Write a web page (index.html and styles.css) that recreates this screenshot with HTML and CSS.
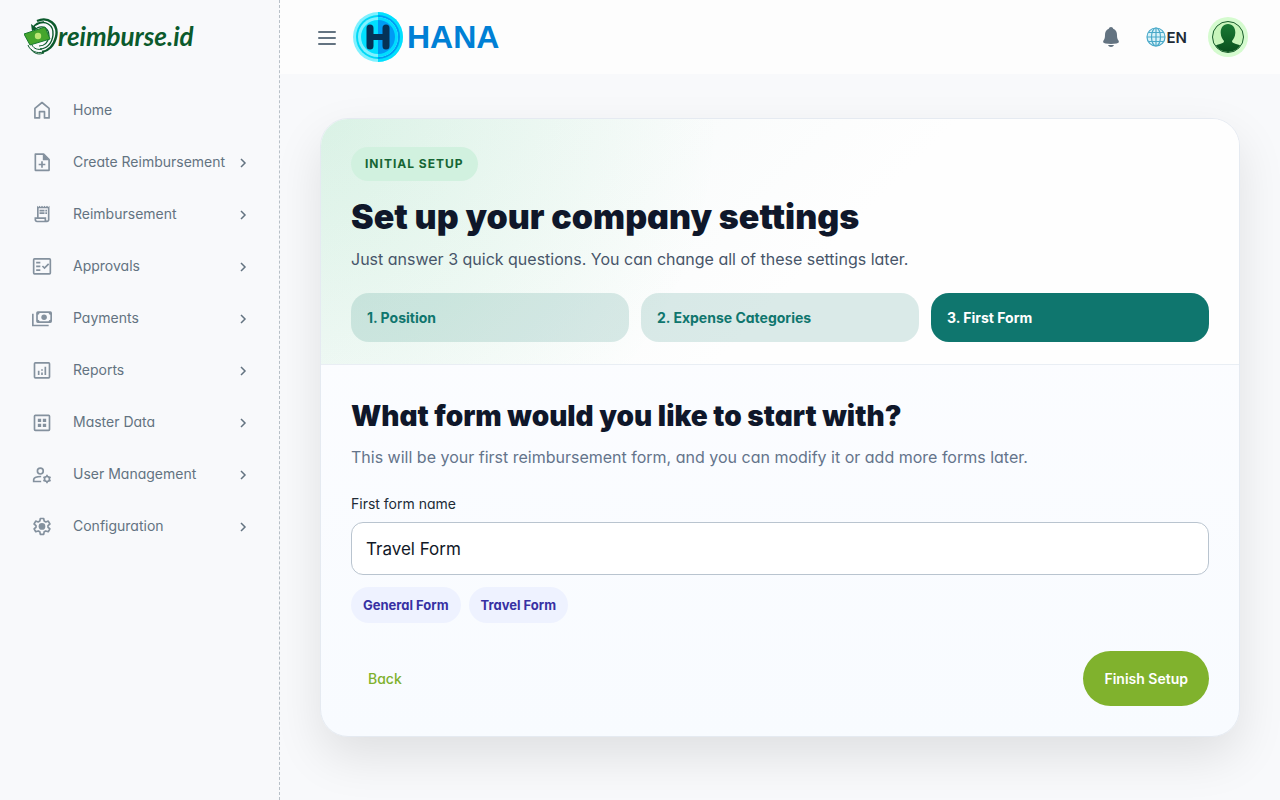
FILE: index.html
```
<!DOCTYPE html>
<html lang="en">

<head>
    <meta charset="UTF-8">
    <meta name="viewport" content="width=device-width, initial-scale=1.0">
    <title>reimburse.id - Initial Setup</title>
    <link rel="stylesheet" href="styles.css">
</head>

<body>
    <aside class="sidebar">
        <a class="logo" href="#" aria-label="reimburse.id">
            <svg width="176" height="40" viewBox="0 0 176 40">
                <g fill="none" stroke="#0b5a2c">
                    <path d="M13 4C24-1 35 7 32 20c-2 9-8 14-14 15" stroke-width="2.4" />
                    <path d="M12 8c9-6 18 0 17 10-1 9-7 14-13 14" stroke-width="1.4" />
                    <path d="M13 11c7-3 12 1 12 8-1 7-5 10-10 10" stroke-width="1.2" />
                    <path d="M4 28c2 6 9 9 16 7M8 28c2 4 6 5 10 4M7 32c3 5 8 6 13 4" stroke-width="1" />
                    <path d="M9 11c2-4 6-6 11-6" stroke-width="1.6" />
                </g>
                <path d="M7 7l1 7 6-2z" fill="#0b5a2c" />
                <path d="M0 17l21-7 5 12-20 6z" fill="#45a52d" stroke="#167a2d" />
                <circle cx="14" cy="19" r="3.2" fill="#bde573" />
                <text class="logo-text" x="34" y="29">reimburse.id</text>
            </svg>
        </a>
        <nav class="menu">
            <a class="menu-item" href="#">
                <svg class="menu-icon" viewBox="0 0 24 24" fill="none" stroke="currentColor" stroke-width="2" stroke-linejoin="round"><path d="M3.500 10l8.500-7 8.500 7v11.500H15V14H9v7.500H3.500z" /></svg>
                <span>Home</span>
            </a>
            <a class="menu-item" href="#">
                <svg class="menu-icon" viewBox="0 0 24 24"><path fill="none" stroke="currentColor" stroke-width="2" stroke-linejoin="round" d="M4 2.500h10l6.500 6.500v13H4zM12 11v8M8 15h8" /><path fill="currentColor" d="M13 2v8h8z" /></svg>
                <span>Create Reimbursement</span>
                <svg class="chevron" viewBox="0 0 16 16"><path d="M6 5l4 4-4 4" /></svg>
            </a>
            <a class="menu-item" href="#">
                <svg class="menu-icon" viewBox="0 0 24 24" fill="currentColor"><path d="M19.500 3.500L18 2l-1.500 1.500L15 2l-1.500 1.500L12 2l-1.500 1.500L9 2 7.500 3.500 6 2v14H3v3c0 1.660 1.340 3 3 3h12c1.660 0 3-1.340 3-3V2zM15 20H6c-.55 0-1-.45-1-1v-1h10zm4-1c0 .55-.45 1-1 1s-1-.45-1-1v-3H8V5h11z" /><path d="M9 7h6v2H9zM16 7h2v2h-2zM9 10h6v2H9zM16 10h2v2h-2z" /></svg>
                <span>Reimbursement</span>
                <svg class="chevron" viewBox="0 0 16 16"><path d="M6 5l4 4-4 4" /></svg>
            </a>
            <a class="menu-item" href="#">
                <svg class="menu-icon" viewBox="0 0 24 24" fill="none" stroke="currentColor" stroke-width="2"><rect x="2" y="3.500" width="20" height="18" rx="1" /><path d="M5 8h5M5 12.500h5M5 17h5M12.500 12l2.500 2.500 5-5" /></svg>
                <span>Approvals</span>
                <svg class="chevron" viewBox="0 0 16 16"><path d="M6 5l4 4-4 4" /></svg>
            </a>
            <a class="menu-item" href="#">
                <svg class="menu-icon" viewBox="0 0 24 24"><path fill="none" stroke="currentColor" stroke-width="2" d="M1 7v14H20" /><path fill="currentColor" fill-rule="evenodd" d="M7 4h15a2 2 0 0 1 2 2v10a2 2 0 0 1-2 2H7a2 2 0 0 1-2-2V6a2 2 0 0 1 2-2zm2 2a2 2 0 0 1-2 2v6a2 2 0 0 1 2 2h11a2 2 0 0 1 2-2V8a2 2 0 0 1-2-2z" /><circle cx="14.500" cy="11" r="3.300" fill="currentColor" /></svg>
                <span>Payments</span>
                <svg class="chevron" viewBox="0 0 16 16"><path d="M6 5l4 4-4 4" /></svg>
            </a>
            <a class="menu-item" href="#">
                <svg class="menu-icon" viewBox="0 0 24 24" fill="none" stroke="currentColor" stroke-width="2"><rect x="3" y="3.500" width="18" height="18" rx="1" /><path d="M8 13v5M12 15v3M12 11v2M16 8v10" /></svg>
                <span>Reports</span>
                <svg class="chevron" viewBox="0 0 16 16"><path d="M6 5l4 4-4 4" /></svg>
            </a>
            <a class="menu-item" href="#">
                <svg class="menu-icon" viewBox="0 0 24 24"><rect x="3" y="4" width="18" height="18" rx="1" fill="none" stroke="currentColor" stroke-width="2" /><path fill="currentColor" d="M7 8h4v4H7zM13 8h4v4h-4zM7 14h4v4H7zM13 14h4v4h-4z" /></svg>
                <span>Master Data</span>
                <svg class="chevron" viewBox="0 0 16 16"><path d="M6 5l4 4-4 4" /></svg>
            </a>
            <a class="menu-item" href="#">
                <svg class="menu-icon" viewBox="0 0 24 24" fill="none" stroke="currentColor" stroke-width="2"><circle cx="10" cy="8.500" r="3.500" /><path d="M11 21H2v-2c0-2.500 4-4 9-4" /><circle cx="18" cy="18" r="3" /><path d="M18 13v2M18 21v2M13.700 15.500l1.700 1M20.600 19.500l1.700 1M13.700 20.500l1.700-1M20.600 16.500l1.700-1" /></svg>
                <span>User Management</span>
                <svg class="chevron" viewBox="0 0 16 16"><path d="M6 5l4 4-4 4" /></svg>
            </a>
            <a class="menu-item" href="#">
                <svg class="menu-icon" viewBox="0 0 24 24"><path fill="none" stroke="currentColor" stroke-width="2" stroke-linejoin="round" d="M10 3h4l.6 3 2 1.100 2.900-1 2 3.500-2.300 1.900v2l2.300 1.900-2 3.500-2.900-1-2 1.100-.6 3h-4l-.6-3-2-1.100-2.900 1-2-3.500 2.300-1.900v-2L2.500 9.600l2-3.500 2.900 1 2-1.100z" /><circle cx="12" cy="12.500" r="4" fill="currentColor" /></svg>
                <span>Configuration</span>
                <svg class="chevron" viewBox="0 0 16 16"><path d="M6 5l4 4-4 4" /></svg>
            </a>
        </nav>
    </aside>

    <div class="page">
        <header class="topbar">
            <button class="icon-button" type="button" aria-label="Toggle menu">
                <svg width="20" height="20" viewBox="0 0 20 20" fill="none" stroke="#637381" stroke-width="2" stroke-linecap="round"><path d="M2 5h16M2 11h16M2 17h16" /></svg>
            </button>
            <a class="company" href="#">
                <svg width="50" height="50" viewBox="0 0 50 50">
                    <circle cx="25" cy="25" r="25" fill="#80f1ff" />
                    <path d="M25 0a25 25 0 0 1 0 50z" fill="#00e0ff" />
                    <circle cx="25" cy="25" r="22" fill="#00d9f6" />
                    <path d="M25 3a22 22 0 0 1 0 44z" fill="#009bf4" />
                    <circle cx="25" cy="25" r="20" fill="#80f1ff" />
                    <path d="M25 5a20 20 0 0 1 0 40z" fill="#00dcff" />
                    <circle cx="25" cy="25" r="17" fill="#00e0ff" />
                    <path d="M25 8a17 17 0 0 1 0 34z" fill="#009bf4" />
                    <path d="M17 16v18M33 16v18" fill="none" stroke="#053257" stroke-width="7" stroke-linecap="round" />
                    <path d="M17 25h16" stroke="#053257" stroke-width="6" />
                </svg>
                <span>HANA</span>
            </a>
            <div class="topbar-actions">
                <button class="icon-button" type="button" aria-label="Notifications">
                    <svg width="20" height="22" viewBox="0 0 20 22" fill="#637381"><path d="M10 1c1.200 0 2 .8 2.200 1.700C15 3.700 16 6 16 9c0 3 .4 4 1.500 5.500.9 1.500.2 2.700-2 3-3.600.5-7.400.5-11 0-2.200-.3-2.900-1.500-2-3C3.600 13 4 12 4 9c0-3 1-5.300 3.800-6.300C8 1.800 8.800 1 10 1zM7 19h6c-.5 1.300-1.500 2-3 2s-2.500-.7-3-2z" /></svg>
                </button>
                <button class="language" type="button">
                    <svg width="20" height="20" viewBox="0 0 20 20" fill="#d9f2f8" stroke="#4aa9c9" stroke-width="1.200"><circle cx="10" cy="10" r="9" /><ellipse cx="10" cy="10" rx="4.500" ry="9" /><path fill="none" d="M10 1v18M1 10h18M2.500 5.500h15M2.500 14.500h15" /></svg>
                    <span>EN</span>
                </button>
                <button class="icon-button" type="button" aria-label="Account">
                    <svg width="40" height="40" viewBox="0 0 40 40">
                        <defs>
                            <linearGradient id="person" x2="0" y2="1"><stop stop-color="#197a35" /><stop offset="1" stop-color="#084e1c" /></linearGradient>
                            <clipPath id="face"><circle cx="20" cy="20" r="15" /></clipPath>
                        </defs>
                        <circle cx="20" cy="20" r="20" fill="#d5fbcf" />
                        <circle cx="20" cy="20" r="15.500" fill="#c8f5bb" stroke="#175c2b" />
                        <path clip-path="url(#face)" fill="url(#person)" d="M20 7c5 0 7.500 4 7.300 9-.2 4-1.800 6-3.300 8 0 1.500 1 2 4 3 4 1.200 6 2 7 3.500v6H5v-6c1-1.500 3-2.300 7-3.500 3-1 4-1.500 4-3-1.500-2-3.100-4-3.300-8C12.500 11 15 7 20 7z" />
                    </svg>
                </button>
            </div>
        </header>

        <main class="content">
            <section class="card">
                <div class="hero">
                    <span class="badge">INITIAL SETUP</span>
                    <h1>Set up your company settings</h1>
                    <p>Just answer 3 quick questions. You can change all of these settings later.</p>
                    <div class="steps">
                        <div class="step">1. Position</div>
                        <div class="step">2. Expense Categories</div>
                        <div class="step active">3. First Form</div>
                    </div>
                </div>
                <form class="setup-form">
                    <h2>What form would you like to start with?</h2>
                    <p>This will be your first reimbursement form, and you can modify it or add more forms later.</p>
                    <label for="formName">First form name</label>
                    <input type="text" id="formName" value="Travel Form">
                    <div class="chips">
                        <button class="chip" type="button">General Form</button>
                        <button class="chip" type="button">Travel Form</button>
                    </div>
                    <div class="form-actions">
                        <button class="back-button" type="button">Back</button>
                        <button class="finish-button" type="submit">Finish Setup</button>
                    </div>
                </form>
            </section>
        </main>
    </div>
</body>

</html>
```
FILE: styles.css
```
* {
    box-sizing: border-box;
}

body {
    display: flex;
    min-height: 100vh;
    margin: 0;
    background-color: #f8f9fb;
    color: #212b36;
    font-family: Inter, sans-serif;
    font-size: 14px;
    line-height: 22px;
    font-feature-settings: "cv11";
}

h1,
h2,
p {
    margin: 0;
}

a {
    color: inherit;
    text-decoration: none;
}

button {
    border: none;
    padding: 0;
    background: none;
    color: inherit;
    font-family: inherit;
    font-feature-settings: inherit;
    cursor: pointer;
}

svg {
    display: block;
    flex-shrink: 0;
}

/* Sidebar */
.sidebar {
    flex: 0 0 280px;
    border-right: 1px dashed #b8c0c8;
}

.logo {
    display: block;
    padding: 17px 24px;
}

.logo-text {
    fill: #0b5a2c;
    font-family: Lato, sans-serif;
    font-size: 26px;
    font-weight: 700;
    font-style: italic;
}

.menu {
    display: flex;
    flex-direction: column;
    padding: 10px 28px 0 32px;
}

.menu-item {
    display: flex;
    align-items: center;
    height: 52px;
    color: #637381;
}

.menu-icon {
    width: 20px;
    height: 20px;
    margin-right: 21px;
    color: #84919e;
}

.chevron {
    width: 16px;
    height: 16px;
    margin-left: auto;
    fill: none;
    stroke: #637381;
    stroke-width: 1.5;
}

/* Top bar */
.page {
    flex: 1;
    min-width: 0;
}

.topbar {
    display: flex;
    align-items: center;
    height: 74px;
    padding: 0 32px 0 37px;
    background-color: #fdfdfd;
}

.company {
    display: flex;
    align-items: center;
    gap: 4px;
    margin-left: 16px;
    color: #0080d5;
    font-family: "Liberation Sans", Arial, sans-serif;
    font-size: 32px;
    font-weight: 700;
}

.topbar-actions {
    display: flex;
    align-items: center;
    gap: 21px;
    margin-left: auto;
}

.language {
    display: flex;
    align-items: center;
    gap: 1px;
    margin-left: 4px;
    font-size: 15px;
    font-weight: 600;
}

/* Setup card */
.content {
    padding: 44px 40px;
}

.card {
    overflow: hidden;
    border: 1px solid #e5eaf1;
    border-radius: 28px;
    background: linear-gradient(180deg, #fdfdff, #f8fbff);
    box-shadow: 0 20px 48px rgba(0, 0, 0, 0.1);
}

.hero {
    padding: 28px 30px 22px;
    border-bottom: 1px solid #e9eef4;
    background: radial-gradient(circle at top left, rgba(34, 197, 94, 0.12), transparent 42%), linear-gradient(135deg, #f3f8f8, #fefefe 55%);
}

.badge {
    display: inline-block;
    padding: 6px 14px;
    border-radius: 17px;
    background-color: #d1f1df;
    color: #166534;
    font-size: 12px;
    font-weight: 700;
    letter-spacing: 1px;
}

.hero h1 {
    margin-top: 14px;
    color: #0f172a;
    font-size: 34px;
    font-weight: 900;
    line-height: 44px;
}

.hero p {
    margin-top: 8px;
    color: #475569;
    font-size: 16px;
    line-height: 24px;
}

.steps {
    display: grid;
    grid-template-columns: repeat(3, 1fr);
    gap: 12px;
    margin-top: 22px;
}

.step {
    padding: 14px 16px;
    border-radius: 18px;
    background-color: rgba(15, 118, 110, 0.15);
    color: #0f766e;
    font-weight: 700;
    line-height: 21px;
}

.step.active {
    background-color: #0f766e;
    color: #fff;
}

.setup-form {
    padding: 30px;
}

.setup-form h2 {
    color: #0f172a;
    font-size: 28px;
    font-weight: 900;
    line-height: 42px;
}

.setup-form p {
    margin-top: 8px;
    color: #64748b;
    font-size: 16px;
    line-height: 24px;
}

.setup-form label {
    display: block;
    margin: 24px 0 7px;
}

.setup-form input {
    display: block;
    width: 100%;
    height: 53px;
    padding: 0 14px;
    border: 1px solid #b9c4cf;
    border-radius: 12px;
    background-color: #fff;
    color: #111827;
    font-family: inherit;
    font-size: 17px;
    font-feature-settings: normal;
}

.chips {
    display: flex;
    gap: 8px;
    margin-top: 12px;
}

.chip {
    height: 36px;
    padding: 0 12px;
    border-radius: 18px;
    background-color: #eef2ff;
    color: #3730a3;
    font-size: 13px;
    font-weight: 700;
}

.form-actions {
    display: flex;
    justify-content: space-between;
    align-items: center;
    margin-top: 28px;
}

.back-button {
    padding: 8px 17px;
    color: #7fb12d;
    font-size: 14px;
    font-weight: 500;
}

.finish-button {
    height: 55px;
    padding: 0 21px;
    border-radius: 28px;
    background-color: #80b22d;
    color: #fff;
    font-size: 14px;
    font-weight: 600;
}
```
